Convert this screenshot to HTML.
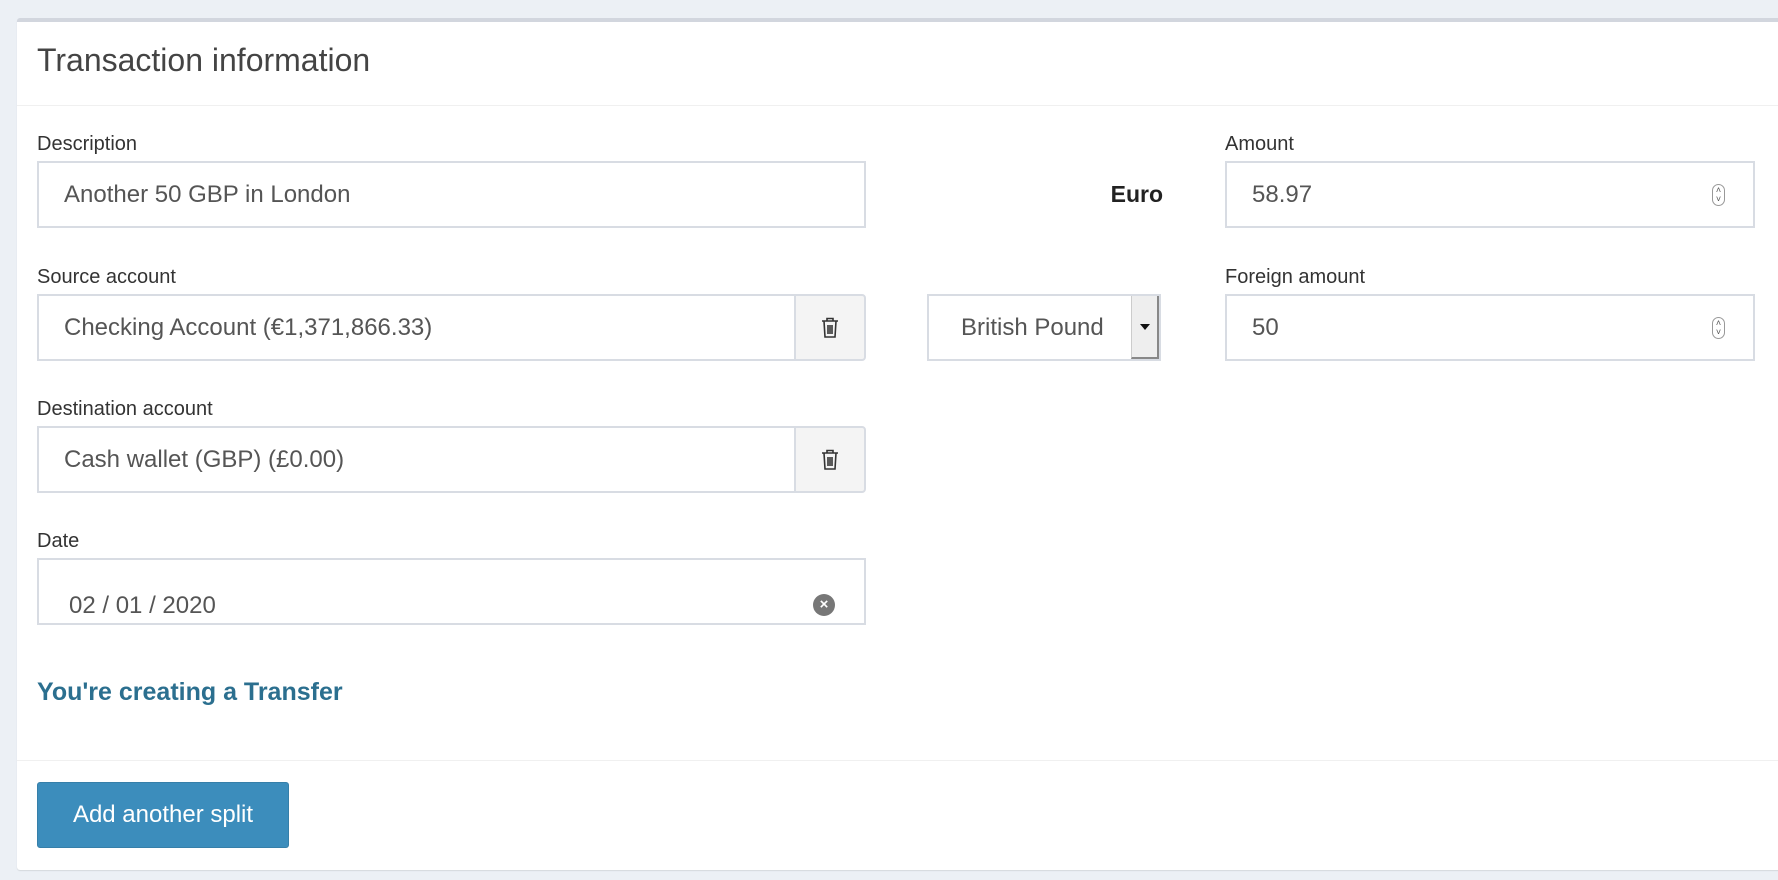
<!DOCTYPE html>
<html><head><meta charset="utf-8"><style>
*{box-sizing:border-box;margin:0;padding:0}
body{width:1778px;height:880px;background:#ecf0f5;font-family:"Liberation Sans",sans-serif;color:#333;position:relative;overflow:hidden}
.card{position:absolute;left:17px;top:18px;width:1775px;height:852px;background:#fff;border-top:4px solid #d2d6de;border-radius:3px;box-shadow:0 1px 1px rgba(0,0,0,.1)}
.a{position:absolute}
.title{left:20px;top:20px;font-size:32px;color:#444}
.hl{left:0;right:0;height:1px;background:#f0f0f0}
.lbl{font-size:20px;color:#333}
.inp{border:2px solid #d8dce3;background:#fff;font-size:24px;color:#555;padding-left:25px;display:flex;align-items:center}
.trash{border:2px solid #d8dce3;background:#f4f4f4;border-radius:0 4px 4px 0;display:flex;align-items:center;justify-content:center}
.spin{position:absolute;right:28px;top:50%;margin-top:-11px;width:13px;height:22px;border:1px solid #999;border-radius:7px;font-size:9px;line-height:9px;text-align:center;color:#555;padding-top:1px}
</style></head><body>
<div class="card">
<div class="a title">Transaction information</div>
<div class="a hl" style="top:83px"></div>

<div class="a lbl" style="left:20px;top:111px">Description</div>
<div class="a inp" style="left:20px;top:139px;width:829px;height:67px">Another 50 GBP in London</div>

<div class="a" style="left:1040px;width:106px;text-align:right;top:159px;font-size:23px;font-weight:bold;color:#222">Euro</div>
<div class="a lbl" style="left:1208px;top:111px">Amount</div>
<div class="a inp" style="left:1208px;top:139px;width:530px;height:67px">58.97<div class="spin">˄<br>˅</div></div>

<div class="a lbl" style="left:20px;top:244px">Source account</div>
<div class="a inp" style="left:20px;top:272px;width:758px;height:67px;border-right:none">Checking Account (€1,371,866.33)</div>
<div class="a trash" style="left:777px;top:272px;width:72px;height:67px"><svg width="18" height="22" viewBox="0 0 18 22" fill="none" stroke="#333" stroke-width="1.6"><path d="M1 4h16M6 4V1.5h6V4M3 4l1 16h10l1-16M7 8v9M9 8v9M11 8v9"/></svg></div>

<div class="a inp" style="left:910px;top:272px;width:234px;height:67px;padding-left:32px">British Pound
<div class="a" style="right:0;top:0;width:28px;height:63px;background:#eee;border-left:1px solid #ccc;border-right:2px solid #888;border-bottom:2px solid #888"><div style="position:absolute;left:8px;top:28px;border-left:5px solid transparent;border-right:5px solid transparent;border-top:6px solid #111"></div></div></div>

<div class="a lbl" style="left:1208px;top:244px">Foreign amount</div>
<div class="a inp" style="left:1208px;top:272px;width:530px;height:67px">50<div class="spin">˄<br>˅</div></div>

<div class="a lbl" style="left:20px;top:376px">Destination account</div>
<div class="a inp" style="left:20px;top:404px;width:758px;height:67px;border-right:none">Cash wallet (GBP) (£0.00)</div>
<div class="a trash" style="left:777px;top:404px;width:72px;height:67px"><svg width="18" height="22" viewBox="0 0 18 22" fill="none" stroke="#333" stroke-width="1.6"><path d="M1 4h16M6 4V1.5h6V4M3 4l1 16h10l1-16M7 8v9M9 8v9M11 8v9"/></svg></div>

<div class="a lbl" style="left:20px;top:508px">Date</div>
<div class="a inp" style="left:20px;top:536px;width:829px;height:67px;align-items:flex-end;padding-bottom:3px;padding-left:30px">02 / 01 / 2020
<div class="a" style="left:774px;top:34px;width:22px;height:22px;border-radius:50%;background:#777;color:#fff;font-size:15px;font-weight:bold;line-height:22px;text-align:center">×</div></div>

<div class="a" style="left:20px;top:656px;font-size:25px;font-weight:bold;color:#2b6f8f">You're creating a Transfer</div>

<div class="a hl" style="top:738px"></div>
<div class="a" style="left:20px;top:760px;width:252px;height:66px;background:#3c8dbc;border:1px solid #367fa9;border-radius:3px;color:#fff;font-size:24px;display:flex;align-items:center;justify-content:center">Add another split</div>
</div>
</body></html>
